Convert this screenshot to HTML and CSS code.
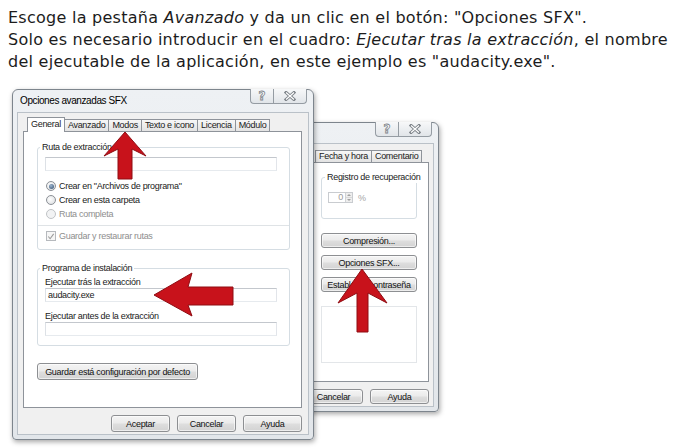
FILE: index.html
```html
<!DOCTYPE html>
<html lang="es">
<head>
<meta charset="utf-8">
<title>Opciones avanzadas SFX</title>
<link rel="stylesheet" href="styles.css">
</head>
<body>
<div class="intro">
  <p>Escoge la pestaña <em>Avanzado</em> y da un clic en el botón: "Opciones SFX".</p>
  <p>Solo es necesario introducir en el cuadro: <em>Ejecutar tras la extracción</em>, el nombre<br>del ejecutable de la aplicación, en este ejemplo es "audacity.exe".</p>
</div>
<div class="stage">
  <div class="win win-back">
    <div class="titlebar">
      <span class="title"></span>
      <div class="ctrls">
        <span class="cb help">?</span>
        <span class="cb close"><svg width="12" height="10" viewBox="0 0 12 10"><path d="M2 1.5L10 8.5M10 1.5L2 8.5" stroke="#7c8288" stroke-width="3" stroke-linecap="square"/><path d="M2 1.5L10 8.5M10 1.5L2 8.5" stroke="#fff" stroke-width="1.2"/></svg></span>
      </div>
    </div>
    <div class="client">
      <div class="tabs">
        <span class="tab">Fecha y hora</span><span class="tab">Comentario</span>
      </div>
      <div class="panel">
        <div class="group g-rec">
          <div class="legend">Registro de recuperación</div>
          <div class="spin-row">
            <span class="spin"><span class="spin-val">0</span><span class="spin-btns"><i class="up"></i><i class="down"></i></span></span>
            <span class="pct">%</span>
          </div>
        </div>
        <button class="btn wide first">Compresión...</button>
        <button class="btn wide">Opciones SFX...</button>
        <button class="btn wide">Establecer contraseña</button>
        <div class="blank"></div>
      </div>
      <div class="footer">
        <button class="btn">Cancelar</button>
        <button class="btn">Ayuda</button>
      </div>
    </div>
  </div>

  <div class="win win-front">
    <div class="titlebar">
      <span class="title">Opciones avanzadas SFX</span>
      <div class="ctrls">
        <span class="cb help">?</span>
        <span class="cb close"><svg width="12" height="10" viewBox="0 0 12 10"><path d="M2 1.5L10 8.5M10 1.5L2 8.5" stroke="#7c8288" stroke-width="3" stroke-linecap="square"/><path d="M2 1.5L10 8.5M10 1.5L2 8.5" stroke="#fff" stroke-width="1.2"/></svg></span>
      </div>
    </div>
    <div class="client">
      <div class="tabs">
        <span class="tab sel">General</span><span class="tab">Avanzado</span><span class="tab">Modos</span><span class="tab">Texto e icono</span><span class="tab">Licencia</span><span class="tab">Módulo</span>
      </div>
      <div class="panel">
        <div class="group">
          <div class="legend">Ruta de extracción</div>
          <div class="tb"></div>
          <div class="opt first"><span class="radio on"></span>Crear en "Archivos de programa"</div>
          <div class="opt"><span class="radio"></span>Crear en esta carpeta</div>
          <div class="opt dis"><span class="radio"></span>Ruta completa</div>
          <div class="sep"></div>
          <div class="opt dis chk-row"><span class="check"><svg width="9" height="9" viewBox="0 0 9 9"><path d="M1.5 4.5L3.5 7L7.5 1.5" fill="none" stroke="#9a9a9a" stroke-width="1.2"/></svg></span>Guardar y restaurar rutas</div>
        </div>
        <div class="group g-prog">
          <div class="legend">Programa de instalación</div>
          <div class="lbl first">Ejecutar trás la extracción</div>
          <div class="tb">audacity.exe</div>
          <div class="lbl">Ejecutar antes de la extracción</div>
          <div class="tb"></div>
        </div>
        <button class="btn save">Guardar está configuración por defecto</button>
      </div>
      <div class="footer">
        <button class="btn">Aceptar</button>
        <button class="btn">Cancelar</button>
        <button class="btn">Ayuda</button>
      </div>
    </div>
  </div>
</div>

<svg class="arrows" width="674" height="448" viewBox="0 0 674 448">
  <polygon points="125,132 146,156 132,149 132,179 118,179 118,149 104,156"/>
  <polygon points="154,295 192,273 188,287 233,287 233,305 188,305 192,316"/>
  <polygon points="362,269 387,303 368,293 368,332 357,332 357,293 338,303"/>
</svg>
</body>
</html>
```

FILE: styles.css
```css
* { box-sizing: border-box; }
html, body { margin: 0; padding: 0; }
body {
  width: 674px;
  height: 448px;
  background: #fff;
  position: relative;
  overflow: hidden;
  font-family: "Liberation Sans", Arial, sans-serif;
  font-size: 9px;
  letter-spacing: -0.3px;
  color: #1a1a1a;
}

.intro {
  height: 85px;
  padding: 7px 0 0 8px;
  font-family: "DejaVu Sans", Verdana, sans-serif;
  font-size: 16px;
  letter-spacing: 0.26px;
  line-height: 22px;
  color: #1c1c1c;
  white-space: nowrap;
}
.intro p { margin: 0; }

.stage { position: relative; height: 363px; }

.win {
  position: absolute;
  display: flex;
  flex-direction: column;
  border: 1px solid #7d858d;
  border-radius: 6px 6px 4px 4px;
  background: linear-gradient(#eef1f4, #e2e6ea);
  box-shadow: 1px 2px 5px rgba(0, 0, 0, .35);
  padding: 0 4px 4px;
}
.win-front { left: 12px; top: 4px; width: 302px; height: 351px; }
.win-back { left: 290px; top: 37px; width: 149px; height: 290px; }

.titlebar { display: flex; height: 22px; flex: none; }
.win-back .titlebar { height: 20px; }
.title {
  align-self: center;
  padding: 0 0 1px 3px;
  font-size: 10px;
  letter-spacing: -0.4px;
  color: #000;
}
.ctrls {
  margin-left: auto;
  margin-right: 2px;
  margin-top: -1px;
  display: flex;
  align-self: flex-start;
}
.cb {
  height: 15px;
  display: flex;
  align-items: center;
  justify-content: center;
  border: 1px solid #959ca3;
  border-top: none;
  background: linear-gradient(#f7f8f9, #e1e5e9);
}
.cb.help {
  width: 23px;
  border-radius: 0 0 0 4px;
  border-right: none;
  font-family: "DejaVu Sans", sans-serif;
  font-weight: bold;
  font-size: 12px;
  letter-spacing: 0;
  color: #fff;
  -webkit-text-stroke: 0.8px #7c8288;
}
.cb.close { width: 34px; border-radius: 0 0 4px 0; }

.client {
  flex: 1;
  min-height: 0;
  display: flex;
  flex-direction: column;
  background: #f0f0f0;
  border: 1px solid #bac1c8;
  padding: 4px 6px 2px 5px;
}
.win-back .client { padding-right: 4px; }

.tabs {
  flex: none;
  display: flex;
  align-items: flex-end;
  height: 14px;
  padding-left: 4px;
}
.win-back .tabs { padding-left: 14px; }
.tab {
  height: 12px;
  line-height: 10px;
  padding: 0 3px;
  border: 1px solid #8e939a;
  border-bottom: none;
  background: linear-gradient(#f7f7f7, #e3e3e3);
  margin-right: -1px;
  white-space: nowrap;
}
.tab.sel {
  height: 15px;
  line-height: 12px;
  margin-bottom: -1px;
  background: #fff;
  position: relative;
  z-index: 1;
}

.panel {
  flex: 1;
  display: flex;
  flex-direction: column;
  align-items: stretch;
  background: #fff;
  border: 1px solid #8e939a;
  padding: 15px 11px 0 13px;
}
.win-back .panel { padding: 14px 11px 0 19px; }

.group {
  border: 1px solid #d5dde3;
  border-radius: 3px;
  padding: 0 7px 6px;
}
.legend {
  width: max-content;
  height: 12px;
  line-height: 12px;
  margin: -7px 0 0 -5px;
  padding: 0 2px;
  background: #fff;
}
.g-prog { margin-top: 18px; padding-bottom: 9px; }

.tb {
  height: 14px;
  width: 232px;
  margin-top: 4px;
  padding-left: 2px;
  line-height: 12px;
  background: #fff;
  border: 1px solid;
  border-color: #c3c7cd #e2e5ea #e6eaee #dde1e6;
}
.g-prog .tb { margin-top: 0; }

.opt {
  display: flex;
  align-items: center;
  gap: 3px;
  height: 14px;
  margin-left: 1px;
}
.opt.first { margin-top: 8px; }
.opt.dis { color: #8e8e8e; }

.radio {
  width: 10px;
  height: 10px;
  border-radius: 50%;
  border: 1px solid #8c9096;
  background: radial-gradient(circle at 40% 40%, #fff, #d6d9dc);
  display: flex;
  align-items: center;
  justify-content: center;
}
.radio.on::after {
  content: "";
  width: 5px;
  height: 5px;
  border-radius: 50%;
  background: radial-gradient(circle at 40% 35%, #9fb6cf, #2c4a6b);
}
.opt.dis .radio { border-color: #c0c3c6; background: #f2f3f4; }

.sep {
  border-top: 1px solid #dfe3e6;
  margin: 4px -7px 3px;
}
.check {
  width: 10px;
  height: 10px;
  border: 1px solid #b6b9bd;
  background: #f6f6f6;
  display: flex;
  align-items: center;
  justify-content: center;
}

.lbl { height: 12px; line-height: 12px; margin-top: 8px; }
.lbl.first { margin-top: 2px; }

.btn {
  font: inherit;
  letter-spacing: inherit;
  color: #111;
  height: 17px;
  width: 59px;
  padding: 0;
  border: 1px solid #8d8f92;
  border-radius: 3px;
  background: linear-gradient(#f4f4f4, #ebebeb 48%, #dedede 52%, #d3d3d3);
  box-shadow: inset 0 0 0 1px rgba(255, 255, 255, .6);
  white-space: nowrap;
}
.btn.save {
  align-self: flex-start;
  width: 161px;
  margin-top: 17px;
}
.win-back .btn { height: 15px; }
.btn.wide { width: 96px; margin-top: 7px; }
.btn.wide.first { margin-top: 14px; }

.footer {
  flex: none;
  display: flex;
  justify-content: flex-end;
  gap: 7px;
  margin-top: 7px;
}

.g-rec { padding: 0 6px 15px; }
.g-rec .legend { margin-left: -3px; }
.spin-row { display: flex; align-items: center; margin-top: 9px; height: 11px; }
.spin {
  display: flex;
  width: 25px;
  height: 11px;
  border: 1px solid #c9ccd0;
  background: #fff;
}
.spin-val {
  flex: 1;
  text-align: right;
  padding-right: 2px;
  color: #9a9a9a;
  line-height: 9px;
  font-size: 9px;
}
.spin-btns {
  width: 7px;
  display: flex;
  flex-direction: column;
  border-left: 1px solid #d0d3d6;
  background: #eeeeee;
}
.spin-btns i {
  flex: 1;
  display: flex;
  align-items: center;
  justify-content: center;
}
.spin-btns i.up::after {
  content: "";
  border: 2px solid transparent;
  border-bottom-color: #a0a0a0;
  border-top: none;
}
.spin-btns i.down { border-top: 1px solid #d8d8d8; }
.spin-btns i.down::after {
  content: "";
  border: 2px solid transparent;
  border-top-color: #a0a0a0;
  border-bottom: none;
}
.pct { margin-left: 5px; color: #a5a5a5; font-size: 9px; }

.blank {
  margin-top: 14px;
  height: 57px;
  width: 96px;
  border: 1px solid #e3e6e9;
  background: #fff;
}

.arrows {
  position: absolute;
  left: 0;
  top: 0;
  pointer-events: none;
}
.arrows polygon {
  fill: #c8121b;
  stroke: #8f0c12;
  stroke-width: 1;
  stroke-linejoin: round;
}
```
